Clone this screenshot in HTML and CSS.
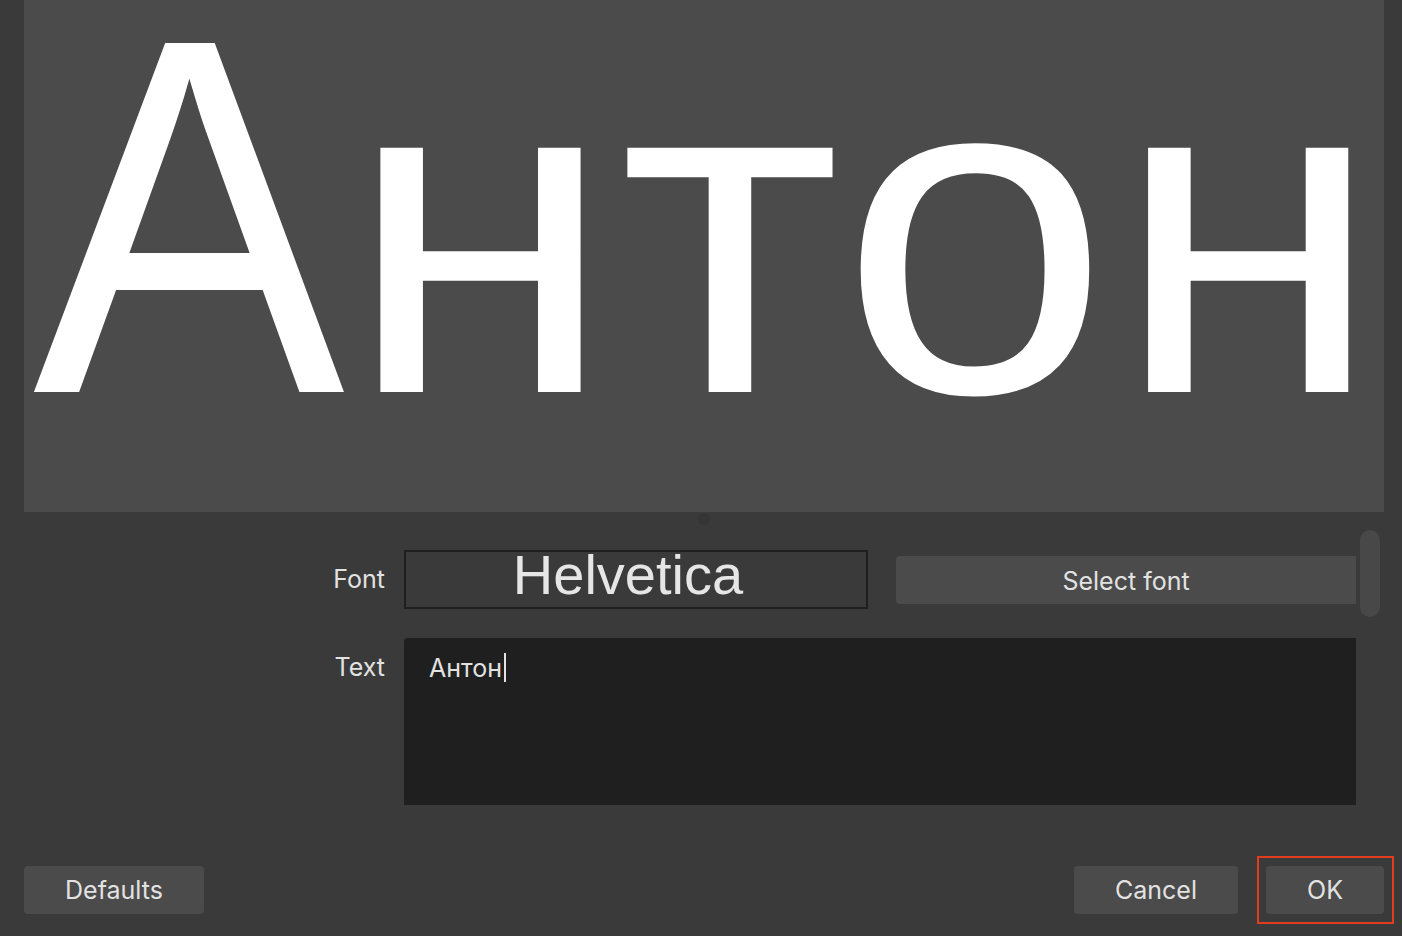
FILE: index.html
```html
<!DOCTYPE html>
<html lang="ru">
<head>
<meta charset="utf-8">
<title>Font</title>
<link rel="stylesheet" href="styles.css">
</head>
<body>
<div class="dialog">
  <div class="preview"><span class="preview-text"><span class="cap">А</span><span class="lower">нтон</span></span></div>
  <div class="splitter"><span class="splitter-dot"></span></div>
  <div class="form-area">
    <div class="form">
      <div class="label label-font">Font</div>
      <div class="font-row">
        <div class="font-box">Helvetica</div>
        <button class="btn btn-select">Select font</button>
      </div>
      <div class="label label-text">Text</div>
      <div class="text-area"><span class="text-value">Антон</span><span class="caret"></span></div>
    </div>
    <div class="scrollbar"></div>
  </div>
  <div class="footer">
    <button class="btn btn-defaults">Defaults</button>
    <div class="footer-right">
      <button class="btn btn-cancel">Cancel</button>
      <button class="btn btn-ok">OK</button>
    </div>
  </div>
</div>
</body>
</html>
```

FILE: styles.css
```css
html, body {
  margin: 0;
  padding: 0;
  background: #3a3a3a;
  height: 100%;
  overflow: hidden;
}

.dialog {
  height: 936px;
  display: flex;
  flex-direction: column;
  font-family: "Inter", "Liberation Sans", sans-serif;
  color: #e2e2e2;
}

.preview {
  margin: 0 18px 0 24px;
  height: 512px;
  background: #4b4b4b;
  overflow: hidden;
  white-space: nowrap;
  padding-left: 9px;
  box-sizing: border-box;
}

.preview-text {
  font-family: "Liberation Sans", Arial, sans-serif;
  font-size: 484px;
  line-height: 449px;
  color: #ffffff;
  display: block;
}

.cap {
  display: inline-block;
  transform: scale(0.966, 1.048);
  transform-origin: 0 392px;
  margin-right: -9px;
}

.lower {
  display: inline-block;
  letter-spacing: 5px;
  transform: scaleY(0.955);
  transform-origin: 0 392px;
}

.splitter {
  height: 0;
  margin: 0 18px 0 24px;
  display: flex;
  justify-content: center;
}

.splitter-dot {
  flex: none;
  width: 12px;
  height: 12px;
  border-radius: 50%;
  background: #353535;
  margin-top: 1px;
}

.form-area {
  flex: 1;
  display: flex;
}

.form {
  width: 1356px;
  display: grid;
  grid-template-columns: 385px 1fr;
  column-gap: 19px;
  row-gap: 29px;
  align-content: start;
  padding-top: 38px;
}

.label {
  font-size: 25px;
  text-align: right;
}

.label-font {
  align-self: center;
  padding-bottom: 2px;
}

.label-text {
  padding-top: 14px;
  line-height: 30px;
}

.font-row {
  display: flex;
  align-items: center;
  gap: 28px;
}

.font-box {
  width: 464px;
  height: 59px;
  box-sizing: border-box;
  border: 2px solid #1f1f1f;
  background: #3a3a3a;
  font-family: "Liberation Sans", Arial, sans-serif;
  font-size: 56px;
  line-height: 46px;
  text-align: center;
  padding-right: 16px;
  color: #e6e6e6;
}

.btn {
  border: none;
  background: #4b4b4b;
  color: #e2e2e2;
  font-family: "Inter", "Liberation Sans", sans-serif;
  font-size: 25px;
  height: 48px;
  border-radius: 4px;
  padding: 0;
  cursor: default;
}

.btn-select {
  flex: 1;
  border-radius: 4px 0 0 4px;
  padding-top: 2px;
}

.text-area {
  height: 167px;
  background: #1f1f1f;
  border-radius: 4px 0 0 0;
  box-sizing: border-box;
  padding: 15px 25px;
  font-size: 25px;
  line-height: 30px;
  display: flex;
  align-items: flex-start;
}

.caret {
  display: inline-block;
  width: 2px;
  height: 29px;
  background: #e2e2e2;
  margin-left: 2px;
}

.scrollbar {
  width: 20px;
  height: 87px;
  margin: 18px 0 0 4px;
  border-radius: 10px;
  background: #484848;
}

.footer {
  display: flex;
  justify-content: space-between;
  align-items: center;
  padding: 0 18px 22px 24px;
}

.footer-right {
  display: flex;
  gap: 28px;
}

.btn-defaults {
  width: 180px;
}

.btn-cancel {
  width: 164px;
}

.btn-ok {
  width: 118px;
  position: relative;
}

.btn-ok::after {
  content: "";
  position: absolute;
  left: -9px;
  right: -10px;
  top: -10px;
  bottom: -10px;
  border: 2px solid #e23b1d;
}
```
